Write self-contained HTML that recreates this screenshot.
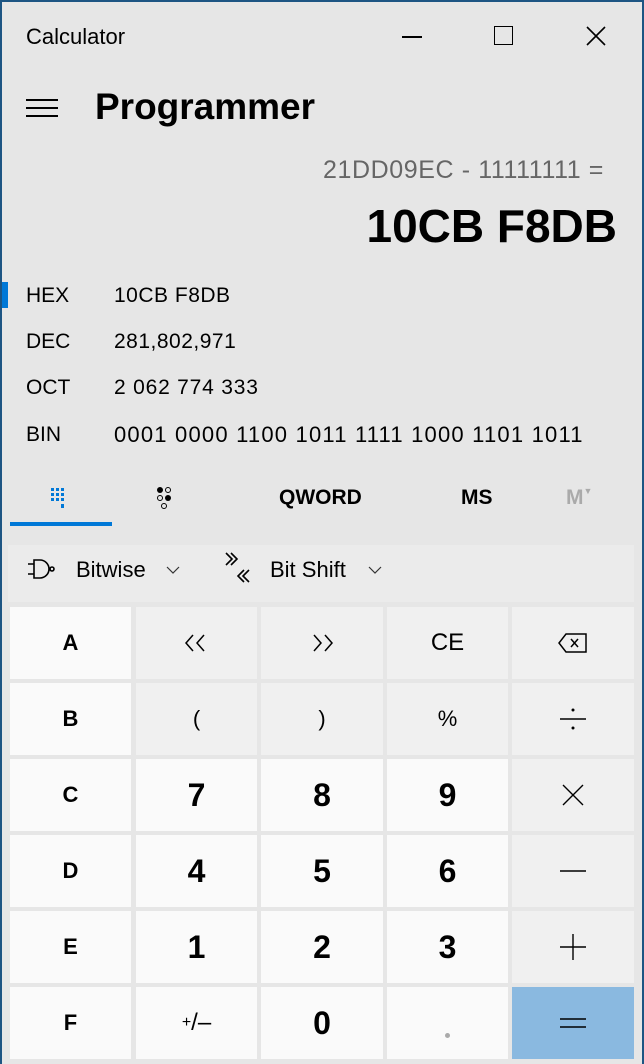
<!DOCTYPE html><html><head><style>
body{margin:0;width:644px;height:1064px;overflow:hidden;background:#e6e6e6;font-family:"Liberation Sans",sans-serif;color:#000;position:relative}
.frame{position:absolute;left:0;top:0;width:640px;height:1062px;border:2px solid #1d5583;border-bottom:none;box-sizing:content-box}
.a{position:absolute;white-space:nowrap}
.b{position:absolute;display:flex;align-items:center;justify-content:center;background:#f0f0f0;font-size:22px}
.w{background:#fafafa}
.d{font-size:32px;font-weight:bold}
.l{font-size:21px;line-height:24px}
</style></head><body>
<div class="frame"></div>
<div class="a" style="left:26px;top:24px;font-size:22px">Calculator</div>
<div class="a" style="left:402px;top:36px;width:20px;height:2px;background:#000"></div>
<div class="a" style="left:494px;top:26px;width:17px;height:17px;border:1.5px solid #000"></div>
<svg class="a" style="left:586px;top:26px" width="20" height="20"><path d="M1 1L19 19M19 1L1 19" stroke="#000" stroke-width="1.6"/></svg>
<svg class="a" style="left:26px;top:98px" width="32" height="22"><path d="M0 2H32M0 10H32M0 18H32" stroke="#000" stroke-width="2"/></svg>
<div class="a" style="left:95px;top:86px;font-size:37px;font-weight:bold">Programmer</div>
<div class="a" style="right:40px;top:156px;font-size:25px;color:#666;letter-spacing:0.6px">21DD09EC - 11111111 =</div>
<div class="a" style="right:27px;top:199px;font-size:46px;font-weight:bold">10CB F8DB</div>
<div class="a" style="left:2px;top:282px;width:6px;height:26px;background:#0078d7"></div>
<div class="a l" style="left:26px;top:284px">HEX</div>
<div class="a l" style="left:26px;top:330px">DEC</div>
<div class="a l" style="left:26px;top:376px">OCT</div>
<div class="a l" style="left:26px;top:423px">BIN</div>
<div class="a l" style="left:114px;top:284px;letter-spacing:0.5px">10CB F8DB</div>
<div class="a l" style="left:114px;top:330px;letter-spacing:0.5px">281,802,971</div>
<div class="a l" style="left:114px;top:376px;letter-spacing:0.8px">2 062 774 333</div>
<div class="a l" style="left:114px;top:423px;font-size:22px;letter-spacing:1.2px">0001 0000 1100 1011 1111 1000 1101 1011</div>
<svg class="a" style="left:51px;top:488px" width="24" height="26" fill="#0078d7"><rect x="0" y="0" width="3" height="3"/><rect x="5" y="0" width="3" height="3"/><rect x="10" y="0" width="3" height="3"/><rect x="0" y="5" width="3" height="3"/><rect x="5" y="5" width="3" height="3"/><rect x="10" y="5" width="3" height="3"/><rect x="0" y="10" width="3" height="3"/><rect x="5" y="10" width="3" height="3"/><rect x="10" y="10" width="3" height="3"/><rect x="10" y="16" width="3" height="4"/></svg>
<svg class="a" style="left:156px;top:487px" width="24" height="26"><circle cx="4" cy="3" r="3"/><circle cx="12" cy="3" r="2.5" fill="none" stroke="#000"/><circle cx="4" cy="11" r="2.5" fill="none" stroke="#000"/><circle cx="12" cy="11" r="3"/><circle cx="8" cy="19" r="2.5" fill="none" stroke="#000"/></svg>
<div class="a" style="left:279px;top:486px;font-size:21px;font-weight:bold">QWORD</div>
<div class="a" style="left:461px;top:486px;font-size:21px;font-weight:bold">MS</div>
<div class="a" style="left:566px;top:486px;font-size:21px;font-weight:bold;color:#aaa">M<span style="font-size:9px;vertical-align:top">▼</span></div>
<div class="a" style="left:10px;top:522px;width:102px;height:4px;background:#0078d7"></div>
<div class="a" style="left:8px;top:545px;width:626px;height:57px;background:#ebebeb"></div>
<svg class="a" style="left:28px;top:557px" width="32" height="26" fill="none" stroke="#000" stroke-width="1.6"><path d="M0 7H6M0 17H6M6 3V21H12A9 9 0 0 0 12 3Z M22 12a2 2 0 1 0 4 0a2 2 0 1 0-4 0"/></svg>
<div class="a" style="left:76px;top:557px;font-size:22px">Bitwise</div>
<svg class="a" style="left:166px;top:566px" width="14" height="8"><path d="M1 1L7 7L13 1" fill="none" stroke="#333" stroke-width="1.2"/></svg>
<svg class="a" style="left:224px;top:552px" width="28" height="34" fill="none" stroke="#000" stroke-width="1.6"><path d="M2 1L8 7L2 13M7 1L13 7L7 13M20 18L14 24L20 30M25 18L19 24L25 30"/></svg>
<div class="a" style="left:270px;top:557px;font-size:22px">Bit Shift</div>
<svg class="a" style="left:368px;top:566px" width="14" height="8"><path d="M1 1L7 7L13 1" fill="none" stroke="#333" stroke-width="1.2"/></svg>

<div class="b w" style="left:10px;top:607px;width:121px;height:72px;font-weight:bold">A</div>
<div class="b" style="left:136px;top:607px;width:121px;height:72px"><svg width="24" height="18" fill="none" stroke="#000" stroke-width="1.5"><path d="M8 1L1 9L8 17M19 1L12 9L19 17"/></svg></div>
<div class="b" style="left:261px;top:607px;width:122px;height:72px"><svg width="24" height="18" fill="none" stroke="#000" stroke-width="1.5"><path d="M4 1L11 9L4 17M15 1L22 9L15 17"/></svg></div>
<div class="b" style="left:387px;top:607px;width:121px;height:72px;font-size:24px">CE</div>
<div class="b" style="left:512px;top:607px;width:122px;height:72px"><svg width="30" height="20" fill="none" stroke="#000" stroke-width="1.5"><path d="M8 1H28V19H8L1 10Z M13 6L20 14M20 6L13 14"/></svg></div>

<div class="b w" style="left:10px;top:683px;width:121px;height:72px;font-weight:bold">B</div>
<div class="b" style="left:136px;top:683px;width:121px;height:72px">(</div>
<div class="b" style="left:261px;top:683px;width:122px;height:72px">)</div>
<div class="b" style="left:387px;top:683px;width:121px;height:72px">%</div>
<div class="b" style="left:512px;top:683px;width:122px;height:72px"><svg width="26" height="24"><path d="M0 12H26" stroke="#000" stroke-width="1.4"/><circle cx="13" cy="3" r="1.5"/><circle cx="13" cy="21" r="1.5"/></svg></div>

<div class="b w" style="left:10px;top:759px;width:121px;height:72px;font-weight:bold">C</div>
<div class="b w d" style="left:136px;top:759px;width:121px;height:72px">7</div>
<div class="b w d" style="left:261px;top:759px;width:122px;height:72px">8</div>
<div class="b w d" style="left:387px;top:759px;width:121px;height:72px">9</div>
<div class="b" style="left:512px;top:759px;width:122px;height:72px"><svg width="22" height="22"><path d="M1 1L21 21M21 1L1 21" stroke="#000" stroke-width="1.4"/></svg></div>

<div class="b w" style="left:10px;top:835px;width:121px;height:72px;font-weight:bold">D</div>
<div class="b w d" style="left:136px;top:835px;width:121px;height:72px">4</div>
<div class="b w d" style="left:261px;top:835px;width:122px;height:72px">5</div>
<div class="b w d" style="left:387px;top:835px;width:121px;height:72px">6</div>
<div class="b" style="left:512px;top:835px;width:122px;height:72px"><svg width="26" height="4"><path d="M0 2H26" stroke="#000" stroke-width="1.4"/></svg></div>

<div class="b w" style="left:10px;top:911px;width:121px;height:72px;font-weight:bold">E</div>
<div class="b w d" style="left:136px;top:911px;width:121px;height:72px">1</div>
<div class="b w d" style="left:261px;top:911px;width:122px;height:72px">2</div>
<div class="b w d" style="left:387px;top:911px;width:121px;height:72px">3</div>
<div class="b" style="left:512px;top:911px;width:122px;height:72px"><svg width="26" height="26"><path d="M0 13H26M13 0V26" stroke="#000" stroke-width="1.4"/></svg></div>

<div class="b w" style="left:10px;top:987px;width:121px;height:72px;font-weight:bold">F</div>
<div class="b w" style="left:136px;top:987px;width:121px;height:72px;font-size:24px"><sup style="font-size:16px">+</sup>/–</div>
<div class="b w d" style="left:261px;top:987px;width:122px;height:72px">0</div>
<div class="b w" style="left:387px;top:987px;width:121px;height:72px"><div style="width:5px;height:5px;border-radius:50%;background:#aaa;margin-top:24px"></div></div>
<div class="b" style="left:512px;top:987px;width:122px;height:72px;background:#8ab9e0"><svg width="26" height="12"><path d="M0 2H26M0 10H26" stroke="#000" stroke-width="1.4"/></svg></div>
</body></html>
